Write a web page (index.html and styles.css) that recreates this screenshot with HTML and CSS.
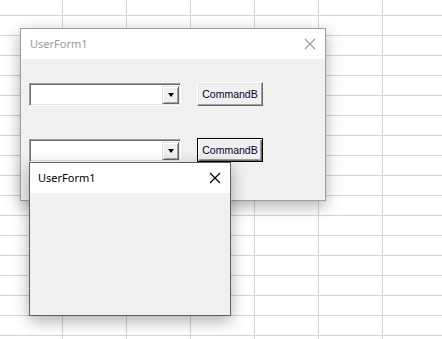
FILE: index.html
```html
<!DOCTYPE html>
<html>
<head>
<meta charset="utf-8">
<link rel="stylesheet" href="styles.css">
</head>
<body>
<div class="sheet">
  <div class="form form-back">
    <div class="titlebar inactive">
      <span class="title">UserForm1</span>
      <svg class="close" width="12" height="12" viewBox="0 0 12 12"><path d="M1 1 L11 11 M11 1 L1 11" stroke="currentColor" stroke-width="1.1" fill="none"/></svg>
    </div>
    <div class="client">
      <div class="row">
        <div class="combo"><div class="combo-field"></div><div class="drop"><span class="tri"></span></div></div>
        <div class="btn">CommandB</div>
      </div>
      <div class="row">
        <div class="combo"><div class="combo-field"></div><div class="drop"><span class="tri"></span></div></div>
        <div class="btn default">CommandB</div>
      </div>
    </div>
  </div>
  <div class="form form-front">
    <div class="titlebar">
      <span class="title">UserForm1</span>
      <svg class="close" width="12" height="12" viewBox="0 0 12 12"><path d="M1 1 L11 11 M11 1 L1 11" stroke="currentColor" stroke-width="1.2" fill="none"/></svg>
    </div>
    <div class="client"></div>
  </div>
</div>
</body>
</html>
```
FILE: styles.css
```css
html, body {
  margin: 0;
  padding: 0;
}
body {
  width: 442px;
  height: 339px;
  overflow: hidden;
  font-family: "Noto Sans", "Liberation Sans", sans-serif;
}
.sheet {
  position: relative;
  width: 442px;
  height: 339px;
  background-color: #ffffff;
  background-image:
    linear-gradient(to right, #d4d4d4 1px, transparent 1px),
    linear-gradient(to bottom, #d4d4d4 1px, transparent 1px);
  background-size: 64px 100%, 100% 20px;
  background-position: 62px 0, 0 15px;
}
.form {
  position: absolute;
  box-sizing: border-box;
  display: flex;
  flex-direction: column;
  background: #f0f0f0;
  box-shadow: 0 5px 15px rgba(0, 0, 0, 0.32);
}
.form-back {
  left: 20px;
  top: 28px;
  width: 306px;
  height: 173px;
  border: 1px solid #9c9c9c;
}
.form-front {
  left: 29px;
  top: 162px;
  width: 202px;
  height: 154px;
  border: 1px solid #5e5e5e;
}
.titlebar {
  height: 30px;
  flex: none;
  background: #ffffff;
  display: flex;
  align-items: center;
  justify-content: space-between;
  padding: 0 9px 0 8px;
  color: #000;
}
.form-back .titlebar {
  padding: 0 9px 0 9px;
}
.titlebar.inactive {
  color: #9a9a9a;
}
.title {
  font-size: 11px;
  line-height: 14px;
  position: relative;
  top: 0px;
}
.close {
  display: block;
}
.client {
  flex: 1;
  padding: 23px 0 0 8px;
  display: flex;
  flex-direction: column;
  gap: 32px;
}
.row {
  display: flex;
  align-items: flex-end;
  gap: 16px;
}
.combo {
  box-sizing: border-box;
  width: 152px;
  height: 23px;
  display: flex;
  background: #fff;
  border-top: 1px solid #a0a0a0;
  border-left: 1px solid #a0a0a0;
  border-right: 1px solid #ffffff;
  border-bottom: 1px solid #ffffff;
  box-shadow: inset 1px 1px 0 #696969, inset -1px -1px 0 #e3e3e3;
  padding: 2px 1px 1px 2px;
}
.combo-field {
  flex: 1;
}
.drop {
  box-sizing: border-box;
  width: 17px;
  height: 100%;
  background: #f0f0f0;
  border-top: 1px solid #e3e3e3;
  border-left: 1px solid #e3e3e3;
  border-right: 1px solid #696969;
  border-bottom: 1px solid #696969;
  box-shadow: inset 1px 1px 0 #ffffff, inset -1px -1px 0 #a0a0a0;
  display: flex;
  align-items: center;
  justify-content: center;
}
.tri {
  width: 0;
  height: 0;
  border-left: 3.5px solid transparent;
  border-right: 3.5px solid transparent;
  border-top: 4px solid #000;
}
.btn {
  box-sizing: border-box;
  width: 66px;
  height: 24px;
  background: #f0f0f0;
  border-top: 1px solid #ffffff;
  border-left: 1px solid #ffffff;
  border-right: 1px solid #696969;
  border-bottom: 1px solid #696969;
  box-shadow: inset -1px -1px 0 #a0a0a0, inset 1px 1px 0 #e3e3e3;
  font-family: "Liberation Sans", Arial, sans-serif;
  font-size: 10.5px;
  color: #000033;
  display: flex;
  align-items: center;
  justify-content: center;
}
.btn.default {
  border: 1px solid #000;
  box-shadow: inset 1px 1px 0 #ffffff, inset -1px -1px 0 #696969, inset -2px -2px 0 #a0a0a0;
}
```
